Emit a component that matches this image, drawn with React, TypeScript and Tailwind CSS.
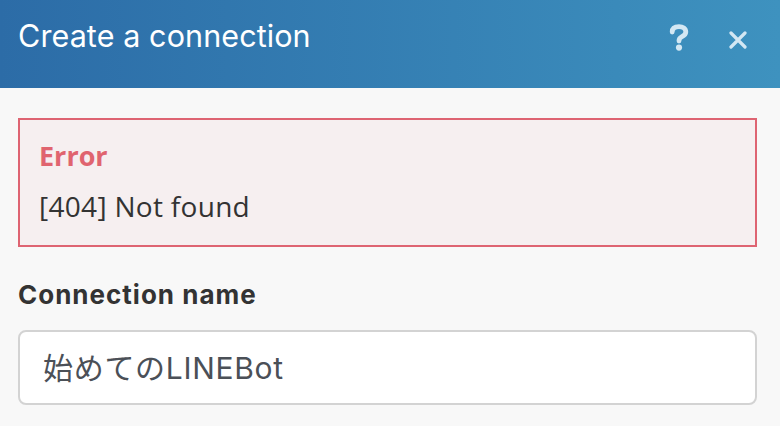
export default function App() {
  return (
    <div className="w-[780px] h-[426px] overflow-hidden bg-[#f8f8f8]">
      {/* Header */}
      <div className="h-[88px] flex items-start justify-between pl-[18px] pr-[33px] bg-gradient-to-r from-[#2c6ca7] to-[#3e92bf]">
        <h1 className="mt-[18px] text-[30.5px] leading-[36px] tracking-[0.1px] text-white font-['Inter',sans-serif]">
          Create a connection
        </h1>
        <div className="flex items-center gap-[40px] mt-[24px]">
          <svg width="20" height="28" viewBox="0 0 20 28" className="text-[#d3e7f3]">
            <path
              d="M3.2 8 C3.2 4 6.2 2.6 10 2.6 C13.8 2.6 16.8 4.4 16.8 8 C16.8 10.8 14.6 11.9 12.6 12.9 C10.6 13.9 10 15 10 17"
              fill="none"
              stroke="currentColor"
              strokeWidth="4.8"
              strokeLinecap="round"
            />
            <circle cx="10" cy="23.6" r="3.1" fill="currentColor" />
          </svg>
          <svg width="18" height="18" viewBox="0 0 18 18" className="mt-[4px] text-[#d3e7f3]">
            <path d="M2 2 L16 16 M16 2 L2 16" stroke="currentColor" strokeWidth="3.2" strokeLinecap="round" />
          </svg>
        </div>
      </div>

      {/* Body */}
      <div className="pl-[18px] pr-[23px] pt-[30px]">
        <div className="border-2 border-[#de6472] bg-[#f6eff0] pl-[19px] pr-4 pt-[18px] pb-[21px] font-['Open_Sans',sans-serif]">
          <div className="text-[27px] leading-[36px] font-bold text-[#e0646f]">Error</div>
          <div className="mt-[14px] text-[28px] leading-[36px] tracking-[0.3px] text-[#333333]">[404] Not found</div>
        </div>

        <label className="block mt-[33px] text-[26px] leading-[30px] tracking-[1px] font-bold text-[#333333] font-['Inter',sans-serif]">
          Connection name
        </label>
        <div className="mt-[20px] h-[75px] border-2 border-[#d3d3d3] rounded-[8px] bg-white flex items-center pl-[23px]">
          <span className="text-[30px] leading-[36px] tracking-[0.7px] text-[#4b5057] font-['Inter','Noto_Sans_CJK_JP',sans-serif]">
            始めてのLINEBot
          </span>
        </div>
      </div>
    </div>
  );
}
